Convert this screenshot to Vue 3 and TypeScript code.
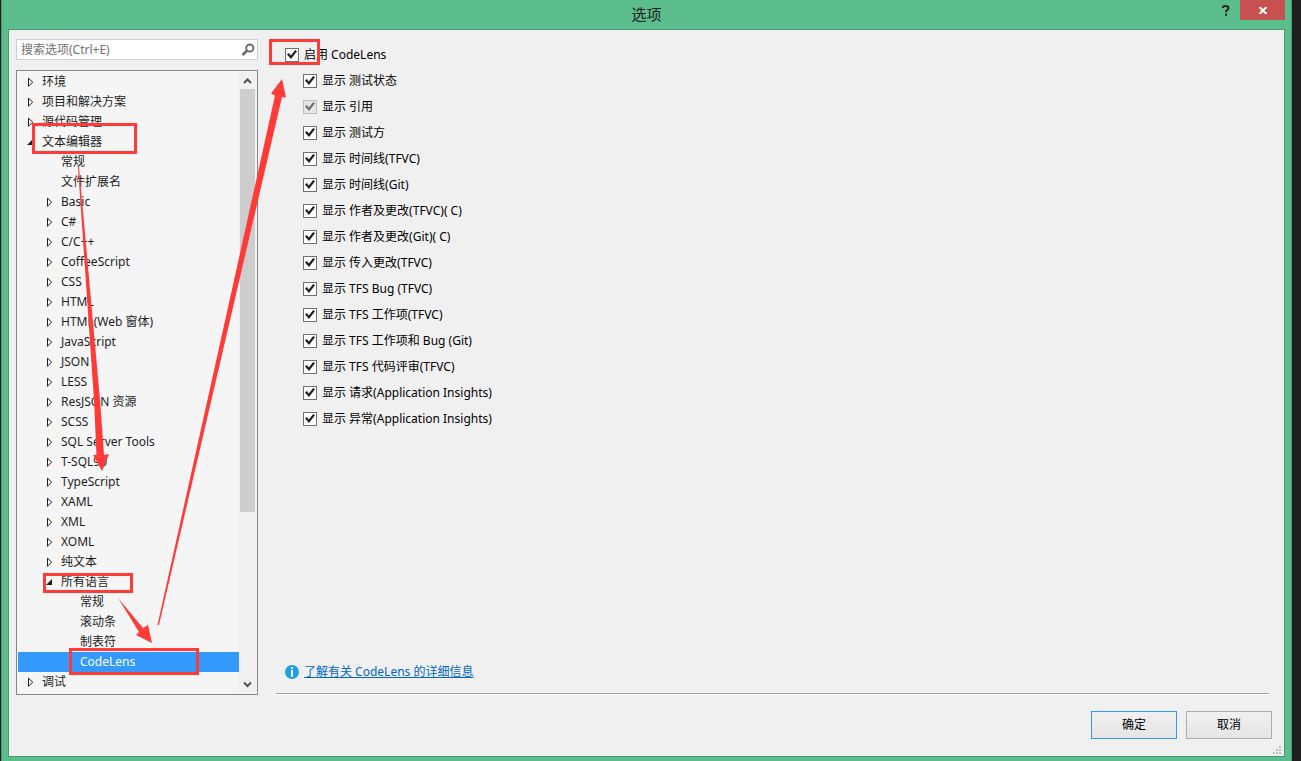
<script setup lang="ts">
import { ref } from 'vue'

interface TreeRow {
  id: number
  label: string
  level: number
  state: 'closed' | 'open' | 'leaf'
}

interface LensOption {
  id: string
  label: string
  checked: boolean
  disabled?: boolean
}

const source: [string, number, TreeRow['state']][] = [
  ['环境', 0, 'closed'],
  ['项目和解决方案', 0, 'closed'],
  ['源代码管理', 0, 'closed'],
  ['文本编辑器', 0, 'open'],
  ['常规', 1, 'leaf'],
  ['文件扩展名', 1, 'leaf'],
  ['Basic', 1, 'closed'],
  ['C#', 1, 'closed'],
  ['C/C++', 1, 'closed'],
  ['CoffeeScript', 1, 'closed'],
  ['CSS', 1, 'closed'],
  ['HTML', 1, 'closed'],
  ['HTML(Web 窗体)', 1, 'closed'],
  ['JavaScript', 1, 'closed'],
  ['JSON', 1, 'closed'],
  ['LESS', 1, 'closed'],
  ['ResJSON 资源', 1, 'closed'],
  ['SCSS', 1, 'closed'],
  ['SQL Server Tools', 1, 'closed'],
  ['T-SQL90', 1, 'closed'],
  ['TypeScript', 1, 'closed'],
  ['XAML', 1, 'closed'],
  ['XML', 1, 'closed'],
  ['XOML', 1, 'closed'],
  ['纯文本', 1, 'closed'],
  ['所有语言', 1, 'open'],
  ['常规', 2, 'leaf'],
  ['滚动条', 2, 'leaf'],
  ['制表符', 2, 'leaf'],
  ['CodeLens', 2, 'leaf'],
  ['调试', 0, 'closed'],
]

const rows: TreeRow[] = source.map(([label, level, state], id) => ({ id, label, level, state }))
const selected = ref(29)
const query = ref('')
const enabled = ref(true)

const options = ref<LensOption[]>([
  { id: 'status', label: '显示 测试状态', checked: true },
  { id: 'refs', label: '显示 引用', checked: true, disabled: true },
  { id: 'testers', label: '显示 测试方', checked: true },
  { id: 'timeline-tfvc', label: '显示 时间线(TFVC)', checked: true },
  { id: 'timeline-git', label: '显示 时间线(Git)', checked: true },
  { id: 'authors-tfvc', label: '显示 作者及更改(TFVC)( C)', checked: true },
  { id: 'authors-git', label: '显示 作者及更改(Git)( C)', checked: true },
  { id: 'incoming', label: '显示 传入更改(TFVC)', checked: true },
  { id: 'bug-tfvc', label: '显示 TFS Bug (TFVC)', checked: true },
  { id: 'work-tfvc', label: '显示 TFS 工作项(TFVC)', checked: true },
  { id: 'work-git', label: '显示 TFS 工作项和 Bug (Git)', checked: true },
  { id: 'review', label: '显示 TFS 代码评审(TFVC)', checked: true },
  { id: 'requests', label: '显示 请求(Application Insights)', checked: true },
  { id: 'exceptions', label: '显示 异常(Application Insights)', checked: true },
])
</script>

<template>
  <div class="desktop">
    <section class="window" role="dialog" aria-labelledby="dialog-title">
      <header class="titlebar">
        <h1 id="dialog-title">选项</h1>
        <div class="window-buttons">
          <button type="button" class="help" aria-label="帮助">
            <svg width="8" height="11" viewBox="0 0 8 11">
              <path d="M1 3V1.8Q2 1 3.6 1Q6.5 1 6.5 3.2Q6.5 4.4 5 5.2Q4 5.8 4 7.2" fill="none" stroke="#1f2a25" stroke-width="2" />
              <rect x="3" y="8.6" width="2" height="2.2" fill="#1f2a25" />
            </svg>
          </button>
          <button type="button" class="close" aria-label="关闭">
            <svg width="8" height="7" viewBox="0 0 8 7">
              <path d="M.5 0L7.5 7M7.5 0L.5 7" stroke="#fff" stroke-width="2" />
            </svg>
          </button>
        </div>
      </header>

      <div class="client">
        <div class="columns">
          <aside class="sidebar">
            <div class="search">
              <input v-model="query" type="text" aria-label="搜索选项" placeholder="搜索选项(Ctrl+E)" />
              <svg width="14" height="14" viewBox="0 0 14 14" aria-hidden="true">
                <circle cx="8.8" cy="5" r="3.6" fill="none" stroke="#6d6d6d" stroke-width="2" />
                <path d="M6.2 7.6L1.5 12" stroke="#6d6d6d" stroke-width="2.8" />
              </svg>
            </div>

            <div class="tree">
              <ul role="tree">
                <li v-for="row in rows" :key="row.id" role="none">
                  <button
                    type="button"
                    role="treeitem"
                    class="row"
                    :class="['level-' + row.level, { selected: selected === row.id }]"
                    :aria-selected="selected === row.id"
                    @click="selected = row.id"
                  >
                    <svg class="expander" width="8" height="10" viewBox="0 0 8 10" aria-hidden="true">
                      <path v-if="row.state === 'closed'" d="M1.5 1.2V9.2L5.7 5.2Z" fill="#fff" stroke="#1e1e1e" />
                      <path v-else-if="row.state === 'open'" d="M6 2V8H0Z" fill="#1e1e1e" />
                    </svg>
                    <span>{{ row.label }}</span>
                  </button>
                </li>
              </ul>
              <div class="scrollbar" aria-hidden="true">
                <svg width="15" height="17" viewBox="0 0 15 17">
                  <path d="M4 11L7.5 7.5L11 11" fill="none" stroke="#505050" stroke-width="2" />
                </svg>
                <div class="track"><div class="thumb"></div></div>
                <svg width="15" height="17" viewBox="0 0 15 17">
                  <path d="M4 6.5L7.5 10L11 6.5" fill="none" stroke="#505050" stroke-width="2" />
                </svg>
              </div>
            </div>
          </aside>

          <main class="panel">
            <div class="settings">
              <label class="check">
                <input v-model="enabled" type="checkbox" />
                <span>启用 CodeLens</span>
              </label>
              <div class="nested">
                <label v-for="option in options" :key="option.id" class="check">
                  <input v-model="option.checked" type="checkbox" :disabled="option.disabled" />
                  <span>{{ option.label }}</span>
                </label>
              </div>
            </div>
            <div class="learn">
              <svg width="14" height="14" viewBox="0 0 14 14" aria-hidden="true">
                <circle cx="7" cy="7" r="7" fill="#1ba1e2" />
                <rect x="6" y="2" width="2" height="2" fill="#fff" />
                <rect x="6" y="5" width="2" height="7" fill="#fff" />
              </svg>
              <a href="#">了解有关 CodeLens 的详细信息</a>
            </div>
          </main>
        </div>

        <footer class="actions">
          <button type="button" class="action primary">确定</button>
          <button type="button" class="action">取消</button>
        </footer>
        <svg class="grip" width="8" height="8" viewBox="0 0 8 8" aria-hidden="true">
          <path d="M6 0h2v2H6zM3 3h2v2H3zM6 3h2v2H6zM0 6h2v2H0zM3 6h2v2H3zM6 6h2v2H6z" fill="#bfbfbf" />
        </svg>
      </div>
    </section>

    <svg class="marks" width="340" height="700" viewBox="0 0 340 700" aria-hidden="true">
      <g fill="none" stroke="#ff3a37" stroke-width="3">
        <rect x="33.5" y="124.5" width="102" height="28" />
        <rect x="44.5" y="574.5" width="87" height="17" />
        <rect x="70.5" y="649.5" width="127" height="24" />
        <rect x="270.5" y="40.5" width="48" height="23" />
      </g>
      <g fill="#ff3a37">
        <path d="M78 167L79 167L100 400L104 455L109 454L102 471L93 455L96.5 455L94 400Z" />
        <path d="M118 598L143 628L148 625L152 643L136 635L139 632Z" />
        <path d="M157.5 625L275 95.5L271 93.5L282 79L286 97.5L282 97L159 625Z" />
      </g>
    </svg>
  </div>
</template>

<style>
body {
  margin: 0;
  background: #1e1e1e;
}
</style>

<style scoped>
* {
  box-sizing: border-box;
}

.desktop {
  position: relative;
  display: flex;
  min-height: 100vh;
  padding: 0 9px 0 1px;
  background: #1e1e1e;
  color: #1e1e1e;
  font-family: 'Noto Sans', 'Noto Sans CJK SC', sans-serif;
  font-size: 12px;
  line-height: 20px;
}

button,
input {
  font: inherit;
  color: inherit;
}

.window {
  flex: 1;
  display: flex;
  flex-direction: column;
  padding: 0 6px 4px;
  border: solid #4a9a70;
  border-width: 0 1px;
  background: #5cbd8c;
}

.titlebar {
  display: grid;
  grid-template-columns: 1fr auto 1fr;
  height: 29px;
}

h1 {
  grid-column: 2;
  margin: 0;
  font-size: 15px;
  font-weight: 400;
  line-height: 29px;
}

.window-buttons {
  display: flex;
  justify-content: flex-end;
  align-items: flex-start;
}

.window-buttons button {
  display: flex;
  align-items: center;
  justify-content: center;
  height: 20px;
  padding: 0;
  border: 0;
  background: none;
}

.window-buttons .help {
  width: 28px;
}

.window-buttons .close {
  width: 45px;
  background: #c75050;
}

.client {
  position: relative;
  flex: 1;
  display: flex;
  flex-direction: column;
  padding: 9px 12px 17px 7px;
  border: 1px solid #4a9a70;
  background: #f0f0f0;
}

.columns {
  flex: 1;
  display: flex;
  gap: 18px;
}

.sidebar {
  display: flex;
  flex-direction: column;
  gap: 10px;
  width: 242px;
}

.search {
  display: flex;
  align-items: center;
  height: 21px;
  padding-right: 2px;
  border: 1px solid #cccedb;
  background: #fff;
}

.search input {
  flex: 1;
  min-width: 0;
  height: 19px;
  padding: 0 4px;
  border: 0;
  outline: 0;
  background: none;
}

.search input::placeholder {
  color: #717171;
  opacity: 1;
}

.tree {
  flex: 1;
  display: flex;
  padding: 1px;
  border: 1px solid #828790;
  background: #f5f5f5;
}

.tree ul {
  flex: 1;
  margin: 0;
  padding: 0;
  list-style: none;
}

.row {
  display: flex;
  align-items: center;
  gap: 7px;
  width: 100%;
  height: 20px;
  border: 0;
  padding: 0 0 0 9px;
  background: none;
  white-space: nowrap;
}

.row.level-1 {
  padding-left: 28px;
}

.row.level-2 {
  padding-left: 47px;
}

.row.selected {
  background: #3399ff;
  color: #fff;
}

.scrollbar {
  display: flex;
  flex-direction: column;
  width: 17px;
  padding: 0 1px;
  background: #f0f0f0;
}

.scrollbar svg {
  display: block;
}

.track {
  flex: 1;
}

.thumb {
  height: 72%;
  background: #cdcdcd;
}

.panel {
  flex: 1;
  display: flex;
  flex-direction: column;
  justify-content: space-between;
  margin: 0 3px 1px 0;
  padding: 3px 0 11px 9px;
  border-bottom: 1px solid #a0a0a0;
  box-shadow: 0 1px #fff;
}

.check {
  display: flex;
  align-items: center;
  gap: 5px;
  height: 26px;
  color: #000;
}

.nested {
  padding-left: 18px;
}

.check input {
  display: grid;
  place-content: center;
  appearance: none;
  width: 14px;
  height: 14px;
  margin: 0 0 1px;
  border: 1px solid #707070;
  background: #fff;
}

.check input:checked::before {
  content: '';
  width: 10px;
  height: 10px;
  background: #212121;
  clip-path: polygon(0 50%, 18% 36%, 38% 60%, 82% 4%, 100% 18%, 40% 96%);
}

.check input:disabled {
  border-color: #bcbcbc;
  background: #e6e6e6;
}

.check input:disabled:checked::before {
  background: #707070;
}

.learn {
  display: flex;
  align-items: center;
  gap: 5px;
}

.learn a {
  color: #0066cc;
}

.actions {
  display: flex;
  justify-content: flex-end;
  gap: 9px;
  margin-top: 16px;
}

.action {
  width: 86px;
  height: 28px;
  padding: 0;
  border: 1px solid #acacac;
  background: linear-gradient(#f0f0f0, #e5e5e5);
  color: #000;
}

.action.primary {
  border-color: #3399ff;
}

.grip {
  position: absolute;
  right: 3px;
  bottom: 2px;
}

.marks {
  position: absolute;
  top: 0;
  left: 0;
  pointer-events: none;
}
</style>
